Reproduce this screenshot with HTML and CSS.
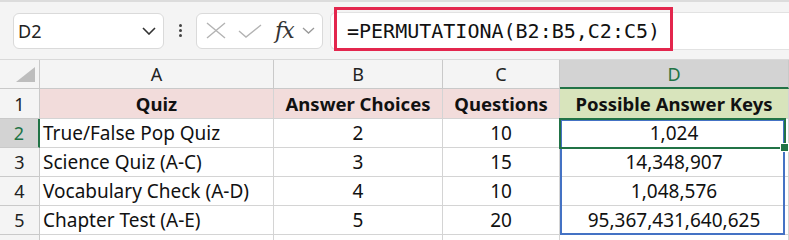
FILE: index.html
```html
<!DOCTYPE html>
<html lang="en">
<head>
  <meta charset="UTF-8">
  <title>PERMUTATIONA</title>
  <link rel="stylesheet" href="styles.css">
</head>
<body>

  <!-- Formula bar -->
  <div class="toolbar">
    <div class="namebox">
      <span>D2</span>
      <svg width="14" height="8" viewBox="0 0 14 8"><path d="M1 1 L7 7 L13 1" fill="none" stroke="#333" stroke-width="1.6"/></svg>
    </div>
    <div class="dots"><i></i><i></i><i></i></div>
    <div class="fxbox">
      <svg width="20" height="17" viewBox="0 0 20 17"><path d="M1 1 L19 16 M19 1 L1 16" stroke="#b3b3b3" stroke-width="1.4"/></svg>
      <svg width="24" height="14" viewBox="0 0 24 14"><path d="M1 7 L8 13 L23 1" fill="none" stroke="#b3b3b3" stroke-width="1.4"/></svg>
      <span class="fx">fx</span>
      <svg width="13" height="7" viewBox="0 0 13 7"><path d="M1 1 L6.5 6 L12 1" fill="none" stroke="#999" stroke-width="1.3"/></svg>
    </div>
    <div class="formula">
      <span>=PERMUTATIONA(B2:B5,C2:C5)</span>
      <div class="highlight"></div>
    </div>
  </div>

  <!-- Sheet -->
  <div class="sheet">
    <div class="hd corner"><div class="tri"></div></div>
    <div class="hd">A</div>
    <div class="hd">B</div>
    <div class="hd">C</div>
    <div class="hd sel-col">D</div>

    <div class="rh">1</div>
    <div class="c title">Quiz</div>
    <div class="c title">Answer Choices</div>
    <div class="c title">Questions</div>
    <div class="c title green">Possible Answer Keys</div>

    <div class="rh sel-row">2</div>
    <div class="c left">True/False Pop Quiz</div>
    <div class="c">2</div>
    <div class="c">10</div>
    <div class="c">1,024</div>

    <div class="rh">3</div>
    <div class="c left">Science Quiz (A-C)</div>
    <div class="c">3</div>
    <div class="c">15</div>
    <div class="c">14,348,907</div>

    <div class="rh">4</div>
    <div class="c left">Vocabulary Check (A-D)</div>
    <div class="c">4</div>
    <div class="c">10</div>
    <div class="c">1,048,576</div>

    <div class="rh">5</div>
    <div class="c left">Chapter Test (A-E)</div>
    <div class="c">5</div>
    <div class="c">20</div>
    <div class="c">95,367,431,640,625</div>

    <div class="rh"></div>
    <div class="c"></div>
    <div class="c"></div>
    <div class="c"></div>
    <div class="c"></div>

    <!-- selection overlays -->
    <div class="range"></div>
    <div class="active"><div class="handle"></div></div>
  </div>

</body>
</html>
```

FILE: styles.css
```css
body {
  margin: 0;
  background: #fff;
  font-family: 'Noto Sans', sans-serif;
  overflow: hidden;
}

/* Formula bar */
.toolbar {
  height: 60px;
  box-sizing: border-box;
  background: #f4f4f4;
  border-top: 2px solid #dcdcdc;
  border-bottom: 1px solid #d9d9d9;
  display: flex;
  align-items: center;
  padding-left: 13px;
}
.namebox {
  width: 151px;
  height: 36px;
  box-sizing: border-box;
  background: #fff;
  border: 1px solid #dadada;
  border-radius: 6px;
  display: flex;
  align-items: center;
  justify-content: space-between;
  padding: 0 7px 0 4px;
  font-size: 18px;
  color: #222;
}
.dots {
  width: 32px;
  display: flex;
  flex-direction: column;
  align-items: center;
  gap: 2px;
}
.dots i {
  width: 3px;
  height: 3px;
  background: #444;
  border-radius: 50%;
}
.fxbox {
  width: 127px;
  height: 36px;
  box-sizing: border-box;
  background: #fff;
  border: 1px solid #dadada;
  border-radius: 6px;
  display: flex;
  align-items: center;
  padding-left: 9px;
  gap: 12px;
}
.fxbox .fx {
  font-family: 'DejaVu Serif', serif;
  font-style: italic;
  font-size: 22px;
  color: #333;
  margin-left: 1px;
  margin-right: -4px;
  letter-spacing: -1px;
}
.formula {
  position: relative;
  flex: 1;
  height: 36px;
  margin-left: 7px;
  background: #fff;
  border: 1px solid #e2e2e2;
  border-right: none;
  border-radius: 6px 0 0 6px;
  display: flex;
  align-items: center;
  padding-left: 16px;
  font-family: 'DejaVu Sans Mono', monospace;
  font-size: 20px;
  color: #111;
}
.highlight {
  position: absolute;
  left: 3px;
  top: -6px;
  width: 333px;
  height: 38px;
  border: 3px solid #e3264d;
}

/* Sheet */
.sheet {
  position: relative;
  display: grid;
  grid-template-columns: 40px 234px 169px 117px 225px 1fr;
  grid-template-rows: 29px 30px 29px 29px 29px 29px 10px;
  font-family: 'Noto Sans', sans-serif;
  font-size: 19px;
  color: #111;
}
.sheet > div:nth-child(5n+5) {
  grid-column: span 2;
}
.hd, .rh {
  background: #f4f4f4;
  border-right: 1px solid #c9c9c9;
  border-bottom: 1px solid #c9c9c9;
  display: flex;
  align-items: center;
  justify-content: center;
  font-size: 18px;
  color: #222;
}
.corner {
  position: relative;
}
.tri {
  position: absolute;
  right: 4px;
  bottom: 6px;
  width: 0;
  height: 0;
  border-left: 19px solid transparent;
  border-bottom: 15px solid #bdbdbd;
}
.sel-col {
  background: #d3d3d3;
  color: #217346;
  border-bottom: 2px solid #217346;
}
.sel-row {
  background: #d3d3d3;
  color: #217346;
  border-right: 2px solid #217346;
}
.c {
  border-right: 1px solid #d4d4d4;
  border-bottom: 1px solid #d4d4d4;
  display: flex;
  align-items: center;
  justify-content: center;
  white-space: nowrap;
}
.c.left {
  justify-content: flex-start;
  padding-left: 3px;
}
.title {
  background: #f2dcdb;
  font-weight: bold;
  font-size: 18.5px;
}
.title.green {
  background: #d8e4bc;
}

.range {
  position: absolute;
  left: 560px;
  top: 59px;
  width: 225px;
  height: 116px;
  box-sizing: border-box;
  border: 2px solid #4472c4;
}
.active {
  position: absolute;
  left: 559px;
  top: 58px;
  width: 227px;
  height: 31px;
  box-sizing: border-box;
  border: 2px solid #217346;
}
.handle {
  position: absolute;
  right: -5px;
  bottom: -5px;
  width: 7px;
  height: 7px;
  background: #217346;
  border: 1px solid #fff;
}
```
